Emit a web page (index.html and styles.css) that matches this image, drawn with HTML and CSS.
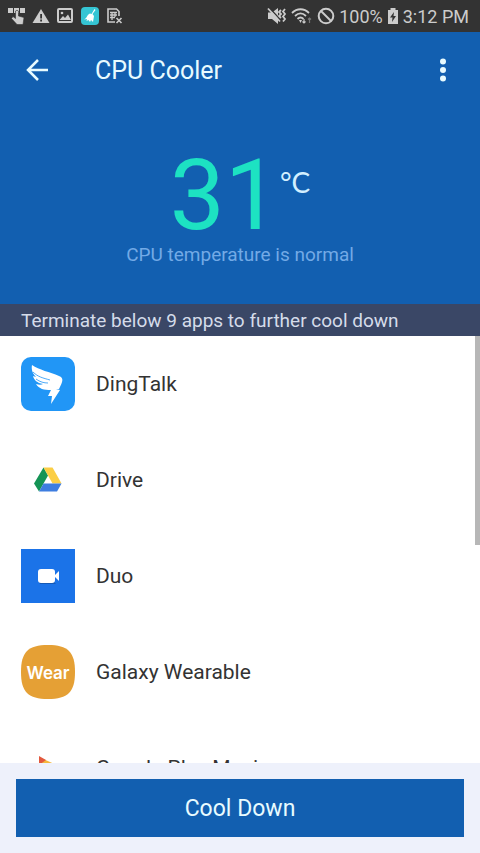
FILE: index.html
```html
<!DOCTYPE html>
<html lang="en">
<head>
<meta charset="utf-8">
<meta name="viewport" content="width=device-width, initial-scale=1">
<title>CPU Cooler</title>
<link rel="stylesheet" href="styles.css">
</head>
<body>
<div class="status">
  <div class="status-group notices">
    <svg width="18" height="18" viewBox="0 0 18 18" fill="#ccc"><path d="M0 1h5v5H0zM6 1h5v5H6zM12 1h5v5h-5z"/><path d="M7.500 4q1.500-1.500 3 0v5l5.500 1.500-1 7H9L3.500 11.500 5 9.500l2.500 2z" stroke="#333" stroke-width=".6"/></svg>
    <svg width="18" height="18" viewBox="0 0 18 18"><path d="M9 2l8.500 14H.5z" fill="#ccc"/><path d="M8.200 7h1.800v4.500H8.200zM8.200 12.500h1.800v2H8.200z" fill="#333"/></svg>
    <svg width="18" height="18" viewBox="0 0 18 18"><rect x="2" y="2" width="14" height="13" rx="1" fill="none" stroke="#ccc" stroke-width="2"/><path d="M3.500 13l3.500-4 2 2 3-3.500 3 5.500z" fill="#ccc"/><circle cx="6" cy="6" r="1.300" fill="#ccc"/></svg>
    <svg width="20" height="20" viewBox="0 0 20 20"><rect x="1" y="1" width="18" height="18" rx="4" fill="#35c5d4"/><path d="M14.500 3l1 1-3 4 1.500 2-1 6-2-2-1 2-1.500-2-2 1 .5-2-3 .5c3-1 3-5 6-6l1.500.5z" fill="#fff"/></svg>
    <svg width="18" height="18" viewBox="0 0 18 18"><path d="M9 15H2V2h8.500L13 4.500V9" fill="none" stroke="#ccc" stroke-width="1.600"/><path d="M4 5.500h7M4 8h7M4 10.500h5M6 5v8M9 5v5" stroke="#ccc" stroke-width="1.300"/><path d="M10.500 11l5 5m0-5l-5 5" stroke="#ccc" stroke-width="1.600"/></svg>
  </div>
  <div class="status-group system">
    <svg width="20" height="18" viewBox="0 0 20 18" fill="#ccc"><path d="M1 5.500h4l6-4.500v16l-6-5H1z"/><path d="M2.500 1l12 13" stroke="#333" stroke-width="1.500"/><path d="M1 1.500l12 13" stroke="#ccc" stroke-width="1.800"/><path d="M14 3l-2 2 2 2-2 2 2 2M18 2l-2 2.500 2 2.500-2 2.500 2 2.500-2 2.500" fill="none" stroke="#ccc" stroke-width="1.800"/></svg>
    <svg width="22" height="18" viewBox="0 0 22 18" fill="none" stroke="#ccc" stroke-width="1.800"><path d="M1 6c5-5 12-5 17 0M4 9c3.500-3.300 7.500-3.300 11 0M6.500 12c2-2 4-2 6 0"/><path d="M8 13h3l-1.500 3z" fill="#ccc" stroke="none"/><path d="M13 12v4m-1.500-1.500L13 16l1.500-1.500" stroke-width="1.200"/><path d="M18.500 16v-5M17 12.500l1.500-1.500 1.500 1.500" stroke="#777" stroke-width="1.200"/></svg>
    <svg width="18" height="18" viewBox="0 0 18 18" fill="none" stroke="#ccc" stroke-width="2"><circle cx="9" cy="9" r="7.300"/><path d="M4 4l10 10"/></svg>
    <span class="percent">100%</span>
    <svg width="12" height="18" viewBox="0 0 12 18"><path d="M3.500 1h5v2H11v14H1V3h2.500z" fill="#ccc"/><path d="M7 5l-4 5.500h2.500L5 15l4-6H6.500z" fill="#333"/></svg>
    <span class="clock">3:12 PM</span>
  </div>
</div>

<header class="hero">
  <div class="toolbar">
    <button class="icon-button" type="button" aria-label="Back">
      <svg width="24" height="24" viewBox="0 0 24 24" fill="none" stroke="#e8fbff" stroke-width="2.500"><path d="M23 12H3M13 2L3 12l10 10"/></svg>
    </button>
    <h1 class="title">CPU Cooler</h1>
    <button class="icon-button" type="button" aria-label="More options">
      <svg width="8" height="24" viewBox="0 0 8 24" fill="#e8fbff"><circle cx="4" cy="3.500" r="3"/><circle cx="4" cy="12" r="3"/><circle cx="4" cy="20.500" r="3"/></svg>
    </button>
  </div>
  <div class="reading"><span class="degrees">31</span><span class="unit">°C</span></div>
  <p class="verdict">CPU temperature is normal</p>
</header>

<p class="strip">Terminate below 9 apps to further cool down</p>

<main class="apps">
  <ul class="app-list">
    <li class="app">
      <svg class="app-icon" viewBox="0 0 54 54"><rect width="54" height="54" rx="10" fill="#2196f6"/><path d="M11 8c7 5 18 7 27 11 5 2 4 5 0 13h-3l4 1-9 14 1-8h-4l3-6c-7 0-12-1-15-6 3 1 5 1 7 0-6-1-9-4-10-8l3 1C12 17 10 13 11 8z" fill="#fff"/><path d="M12 15c5 5 10 6 17 8M15 22c4 3 8 4 12 4" fill="none" stroke="#2196f6" stroke-width=".8"/></svg>
      <span>DingTalk</span>
    </li>
    <li class="app">
      <svg class="app-icon" viewBox="0 0 54 54"><path d="M22.500 14.500l4.500 8-9 16-5-8z" fill="#149455"/><path d="M22.500 14.500h9l9 16h-9z" fill="#fbce45"/><path d="M22.500 30.500h18l-4.500 8H18z" fill="#3d7de0"/></svg>
      <span>Drive</span>
    </li>
    <li class="app">
      <svg class="app-icon" viewBox="0 0 54 54"><path d="M0 0h54v54H0z" fill="#1b73e8"/><path d="M18 33h15l2 2H19z" fill="#1559b5"/><rect x="17" y="20" width="17" height="14" rx="3" fill="#fff"/><path d="M34 26l4-4v10l-4-4z" fill="#fff"/></svg>
      <span>Duo</span>
    </li>
    <li class="app">
      <svg class="app-icon" viewBox="0 0 54 54"><path d="M27 0C47 0 54 7 54 27s-7 27-27 27S0 47 0 27 7 0 27 0z" fill="#e5a035"/><text class="wear" x="27" y="34" text-anchor="middle">Wear</text></svg>
      <span>Galaxy Wearable</span>
    </li>
    <li class="app">
      <svg class="app-icon" viewBox="0 0 54 54"><path d="M18 16v24l22-14z" fill="#f5b83d"/><path d="M18 15l7 4-7 5z" fill="#e2583e"/></svg>
      <span>Google Play Music</span>
    </li>
  </ul>
  <div class="scroll-thumb"></div>
</main>

<footer class="footer"><button class="cool" type="button">Cool Down</button></footer>
</body>
</html>
```

FILE: styles.css
```css
* { box-sizing: border-box; }
body {
  margin: 0;
  height: 100vh;
  display: flex;
  flex-direction: column;
  overflow: hidden;
  background: #fff;
  color: #333;
  font-family: Roboto, "Liberation Sans", sans-serif;
}
svg { display: block; flex: none; }
h1, p, ul { margin: 0; padding: 0; font-weight: 400; }
button { border: 0; padding: 0; font: inherit; cursor: pointer; }

.status {
  flex: none;
  display: flex;
  justify-content: space-between;
  align-items: center;
  height: 32px;
  padding: 0 11px 0 8px;
  background: #333;
  color: #ccc;
  font-size: 18px;
}
.status-group { display: flex; align-items: center; }
.notices { gap: 6px; }
.system { gap: 4px; }

.hero {
  flex: none;
  height: 272px;
  background: #125fb0;
  text-align: center;
}
.toolbar {
  display: flex;
  align-items: center;
  height: 76px;
  padding: 0 14px;
}
.icon-button {
  display: flex;
  align-items: center;
  justify-content: center;
  width: 46px;
  height: 48px;
  background: none;
}
.title {
  flex: 1;
  padding: 2px 0 0 35px;
  color: #e8fbff;
  font-size: 25px;
  line-height: 32px;
  text-align: left;
}
.reading {
  display: flex;
  justify-content: center;
  align-items: flex-start;
  padding-top: 40px;
  line-height: 96px;
}
.degrees { color: #1de2c2; font-size: 98px; }
.unit {
  padding-top: 16px;
  color: #d3efff;
  font-family: Lato, sans-serif;
  font-size: 28px;
  line-height: 36px;
}
.verdict { color: #73aae6; font-size: 19px; line-height: 22px; }

.strip {
  flex: none;
  padding: 2px 21px 0;
  background: #3a4766;
  color: #d5dcea;
  font-size: 19px;
  line-height: 30px;
}

.apps { flex: 1; min-height: 0; position: relative; }
.app-list {
  height: 100%;
  overflow-y: auto;
  scrollbar-width: none;
  list-style: none;
}
.app {
  display: flex;
  align-items: center;
  gap: 21px;
  height: 96px;
  padding: 0 21px;
  font-size: 21px;
}
.app-icon { width: 54px; height: 54px; }
.wear {
  fill: #fff;
  font: 600 17px Inter, sans-serif;
}
.scroll-thumb {
  position: absolute;
  top: 0;
  right: 0;
  width: 5px;
  height: 49%;
  background: #b7b7b7;
}

.footer { flex: none; padding: 16px; background: #eef1fb; }
.cool {
  display: block;
  width: 100%;
  height: 58px;
  background: #125fb0;
  color: #e8fbff;
  font-size: 23px;
}
```
